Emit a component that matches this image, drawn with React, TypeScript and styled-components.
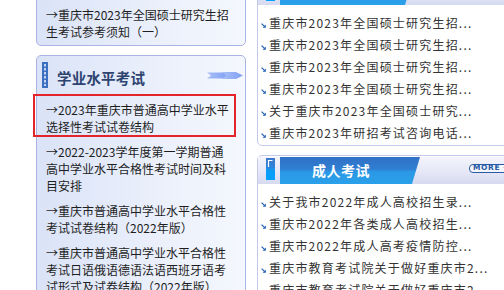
import React from 'react';
import styled, { createGlobalStyle } from 'styled-components';

const Global = createGlobalStyle`
  html, body { margin: 0; padding: 0; background: #fff; overflow: hidden; }
  body { font-family: "Noto Sans CJK SC", "Noto Sans", sans-serif; }
`;

const Page = styled.div`
  display: flex;
  align-items: flex-start;
  gap: 11px;
  padding-left: 36px;
  width: 560px;
  height: 290px;
  overflow: hidden;
`;

const LeftCol = styled.div`
  width: 210px;
  flex: none;
  display: flex;
  flex-direction: column;
  gap: 9px;
  margin-top: -10px;
`;

const SideBox = styled.div<{ $top?: number }>`
  box-sizing: border-box;
  border: 1px solid #aab3e4;
  border-radius: 5px;
  background: linear-gradient(90deg, #dae3f7 0%, #eef2fc 70%, #f4f7fd 100%);
  padding-top: ${(p) => p.$top ?? 0}px;
  padding-bottom: 5px;
`;

const SideHeader = styled.div`
  height: 38px;
  display: flex;
  align-items: center;
  padding: 0 2px 0 5px;
  gap: 9px;
`;

const SideTitle = styled.div`
  font-size: 14.5px;
  font-weight: bold;
  color: #2e4470;
  padding-top: 4px;
  letter-spacing: 0.2px;
`;

const ArrowWrap = styled.div`
  margin-left: auto;
  display: flex;
  padding-top: 1px;
`;

const SideList = styled.div`
  display: flex;
  flex-direction: column;
  gap: 8px;
  padding-top: 7px;
`;

const SideItem = styled.div<{ $hl?: boolean }>`
  position: relative;
  font-size: 12px;
  line-height: 17px;
  color: #1e1e1e;
  width: 185px;
  padding-left: 9px;
  ${(p) =>
    p.$hl
      ? `&::after {
    content: "";
    position: absolute;
    left: -4px;
    right: -5px;
    top: -7px;
    bottom: -2px;
    border: 2px solid #e3252b;
    pointer-events: none;
  }`
      : ''}
`;

const RightCol = styled.div`
  width: 265px;
  flex: none;
  display: flex;
  flex-direction: column;
  gap: 9px;
  margin-top: -24px;
`;

const NewsBox = styled.div`
  border: 1px solid #c5c9e9;
  border-radius: 5px;
  padding: 1px 0 2px;
  background: #fff;
`;

const NewsHeader = styled.div`
  height: 27px;
  display: flex;
  align-items: flex-start;
  background: linear-gradient(180deg, #f3f4fc 0%, #e4e6f6 60%, #d6daf0 100%);
`;

const HeadIcon = styled.div`
  margin: 1px 5px 0 8px;
  display: flex;
`;

const Tab = styled.div<{ $w: number }>`
  width: ${(p) => p.$w}px;
  height: 27px;
  flex: none;
  clip-path: polygon(0 0, 100% 0, calc(100% - 8px) 100%, 0 100%);
  background: linear-gradient(180deg, #3170c6 0%, #2f7fd2 45%, #2a98e6 55%, #2ba0ea 100%);
  color: #fff;
  font-size: 14px;
  font-weight: bold;
  line-height: 27px;
  padding-left: 32px;
  box-sizing: border-box;
  letter-spacing: 0.5px;
`;

const More = styled.div`
  margin: 7px 0 0 49px;
  height: 9px;
  box-sizing: border-box;
  border: 1.5px solid #285aa6;
  border-radius: 4px;
  background: #f4f6fc;
  color: #285aa6;
  font-family: "DejaVu Sans", sans-serif;
  font-weight: bold;
  font-size: 7.5px;
  line-height: 6px;
  padding: 0 3px;
  letter-spacing: 0.6px;
  white-space: nowrap;
`;

const NewsList = styled.div`
  display: flex;
  flex-direction: column;
  padding-top: 6px;
`;

const NewsItem = styled.div`
  height: 22px;
  display: flex;
  align-items: center;
  gap: 3px;
  padding-left: 3px;
  font-size: 12px;
  letter-spacing: 1.2px;
  color: #333;
  white-space: nowrap;
`;

const Bullet = styled.span`
  display: flex;
  margin-top: 6px;
`;

const BulletIcon = () => (
  <Bullet>
    <svg width="5" height="5" viewBox="0 0 5 5">
      <path d="M0.6 0.6 L3.2 3.2" stroke="#1f5fb5" strokeWidth="1.2" />
      <polygon points="4.8,1.6 4.8,4.8 1.6,4.8" fill="#1f5fb5" />
    </svg>
  </Bullet>
);

const FilmIcon = () => (
  <svg width="6" height="26" viewBox="0 0 6 26">
    <rect x="0" y="0" width="6" height="26" fill="#3b6fc4" />
    <line x1="3" y1="2" x2="3" y2="24" stroke="#ffffff" strokeWidth="1.4" strokeDasharray="2.5 1.5" />
  </svg>
);

const DoubleArrow = () => (
  <svg width="36" height="7" viewBox="0 0 36 7">
    <defs>
      <linearGradient id="ag" x1="0" x2="1" y1="0" y2="0">
        <stop offset="0" stopColor="#a9c0f7" />
        <stop offset="1" stopColor="#7f9ff4" />
      </linearGradient>
    </defs>
    <polygon points="0,0.5 17,0.5 21,3.5 17,6.5 0,6.5 4,3.5" fill="url(#ag)" />
    <polygon points="15,0 29,0 36,3.5 29,7 15,7 19,3.5" fill="url(#ag)" />
  </svg>
);

const TabIcon = () => (
  <svg width="9" height="22" viewBox="0 0 9 22">
    <defs>
      <linearGradient id="tg" x1="0" x2="0" y1="0" y2="1">
        <stop offset="0" stopColor="#3d78cc" />
        <stop offset="0.45" stopColor="#2c86dc" />
        <stop offset="0.55" stopColor="#0c9cf6" />
        <stop offset="1" stopColor="#00a2ff" />
      </linearGradient>
    </defs>
    <rect width="9" height="22" fill="url(#tg)" />
    <path d="M2.5 9 V2.5 H6.5" stroke="#ffffff" strokeWidth="1.2" fill="none" />
  </svg>
);

const sideItems = [
  '→2022-2023学年度第一学期普通高中学业水平合格性考试时间及科目安排',
  '→重庆市普通高中学业水平合格性考试试卷结构（2022年版）',
  '→重庆市普通高中学业水平合格性考试日语俄语德语法语西班牙语考试形式及试卷结构（2022年版）',
];

const news1 = [
  '重庆市2023年全国硕士研究生招...',
  '重庆市2023年全国硕士研究生招...',
  '重庆市2023年全国硕士研究生招...',
  '重庆市2023年全国硕士研究生招...',
  '关于重庆市2023年全国硕士研究...',
  '重庆市2023年研招考试咨询电话...',
];

const news2 = [
  '关于我市2022年成人高校招生录...',
  '重庆市2022年各类成人高校招生...',
  '重庆市2022年成人高考疫情防控...',
  '重庆市教育考试院关于做好重庆市2...',
  '重庆市教育考试院关于做好重庆市2...',
];

export default function App() {
  return (
    <>
      <Global />
      <Page>
        <LeftCol>
          <SideBox $top={15}>
            <SideItem>→重庆市2023年全国硕士研究生招生考试参考须知（一）</SideItem>
          </SideBox>
          <SideBox>
            <SideHeader>
              <FilmIcon />
              <SideTitle>学业水平考试</SideTitle>
              <ArrowWrap>
                <DoubleArrow />
              </ArrowWrap>
            </SideHeader>
            <SideList>
              <SideItem $hl>→2023年重庆市普通高中学业水平选择性考试试卷结构</SideItem>
              {sideItems.map((t, i) => (
                <SideItem key={i}>{t}</SideItem>
              ))}
            </SideList>
          </SideBox>
        </LeftCol>
        <RightCol>
          <NewsBox>
            <NewsHeader>
              <HeadIcon>
                <TabIcon />
              </HeadIcon>
              <Tab $w={133}>研究生考试</Tab>
              <More>MORE →</More>
            </NewsHeader>
            <NewsList>
              {news1.map((t, i) => (
                <NewsItem key={i}>
                  <BulletIcon />
                  {t}
                </NewsItem>
              ))}
            </NewsList>
          </NewsBox>
          <NewsBox>
            <NewsHeader>
              <HeadIcon>
                <TabIcon />
              </HeadIcon>
              <Tab $w={140}>成人考试</Tab>
              <More>MORE →</More>
            </NewsHeader>
            <NewsList>
              {news2.map((t, i) => (
                <NewsItem key={i}>
                  <BulletIcon />
                  {t}
                </NewsItem>
              ))}
            </NewsList>
          </NewsBox>
        </RightCol>
      </Page>
    </>
  );
}
